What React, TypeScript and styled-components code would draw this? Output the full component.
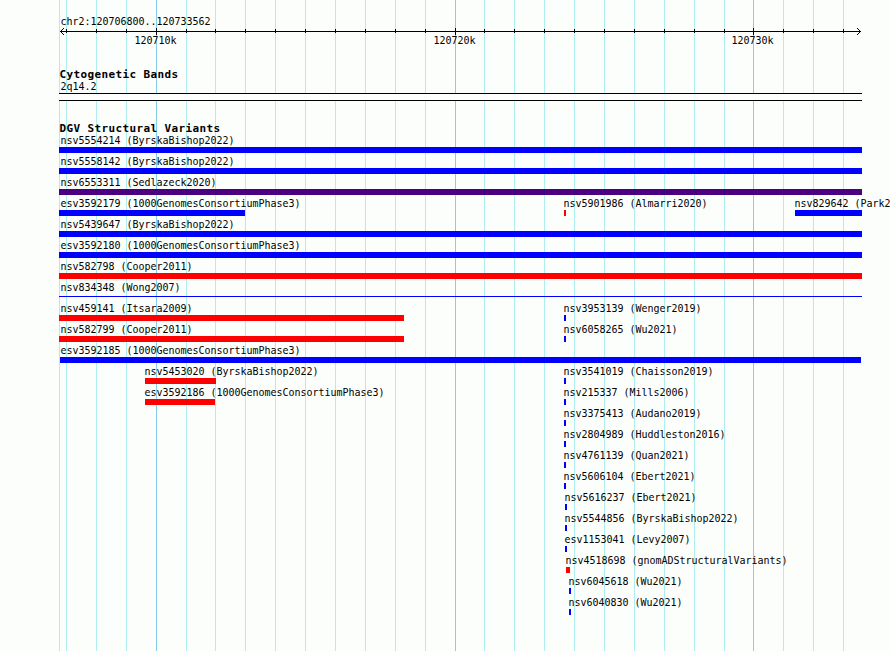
import styled, { createGlobalStyle } from 'styled-components';

type Feature = {
	name: string;
	labelX: number;
	start: number;
	end: number;
	color?: string;
	thin?: boolean;
};

const palette = {
	background: '#fcfefc',
	minor: '#afeeee',
	major: '#87ceeb',
	gain: '#0000ff',
	loss: '#ff0000',
	complex: '#4b0082',
};

const plot = { left: 59, right: 862 };

const minorLines = [
	59, 66, 96, 126, 186, 215, 245, 275, 305, 335, 365, 395, 425, 484, 514, 544,
	574, 604, 634, 664, 694, 724, 783, 813, 843,
];

const majorLines = [
	{ x: 156, label: '120710k' },
	{ x: 455, label: '120720k' },
	{ x: 753, label: '120730k' },
];

const full = (name: string, color = palette.gain): Feature => ({
	name,
	labelX: 60,
	start: plot.left,
	end: plot.right,
	color,
});

const small = (
	name: string,
	start = 564,
	width = 2,
	color = palette.gain
): Feature => ({
	name,
	labelX: start - 1,
	start,
	end: start + width,
	color,
});

const rows: Feature[][] = [
	[full('nsv5554214 (ByrskaBishop2022)')],
	[full('nsv5558142 (ByrskaBishop2022)')],
	[full('nsv6553311 (Sedlazeck2020)', palette.complex)],
	[
		{ ...full('esv3592179 (1000GenomesConsortiumPhase3)'), end: 245 },
		small('nsv5901986 (Almarri2020)', 564, 2, palette.loss),
		small('nsv829642 (Park2010)', 795, 67),
	],
	[full('nsv5439647 (ByrskaBishop2022)')],
	[full('esv3592180 (1000GenomesConsortiumPhase3)')],
	[full('nsv582798 (Cooper2011)', palette.loss)],
	[{ ...full('nsv834348 (Wong2007)'), thin: true }],
	[
		{ ...full('nsv459141 (Itsara2009)', palette.loss), end: 404 },
		small('nsv3953139 (Wenger2019)'),
	],
	[
		{ ...full('nsv582799 (Cooper2011)', palette.loss), end: 404 },
		small('nsv6058265 (Wu2021)'),
	],
	[
		{
			...full('esv3592185 (1000GenomesConsortiumPhase3)'),
			start: 60,
			end: 861,
		},
	],
	[
		small('nsv5453020 (ByrskaBishop2022)', 145, 71, palette.loss),
		small('nsv3541019 (Chaisson2019)'),
	],
	[
		small('esv3592186 (1000GenomesConsortiumPhase3)', 145, 70, palette.loss),
		small('nsv215337 (Mills2006)'),
	],
	[small('nsv3375413 (Audano2019)')],
	[small('nsv2804989 (Huddleston2016)')],
	[small('nsv4761139 (Quan2021)')],
	[small('nsv5606104 (Ebert2021)')],
	[small('nsv5616237 (Ebert2021)', 565)],
	[small('nsv5544856 (ByrskaBishop2022)', 565)],
	[small('esv1153041 (Levy2007)', 565)],
	[small('nsv4518698 (gnomADStructuralVariants)', 566, 4, palette.loss)],
	[small('nsv6045618 (Wu2021)', 569)],
	[small('nsv6040830 (Wu2021)', 569)],
];

const GlobalStyle = createGlobalStyle`
	body {
		margin: 0;
		background-color: ${palette.background};
		overflow: hidden;
	}
`;

const StyledBrowser = styled.main`
	position: relative;
	box-sizing: border-box;
	width: 890px;
	height: 651px;
	padding-top: 15px;
	overflow: hidden;
	display: flex;
	flex-direction: column;
	gap: 21px;
	color: #000;
	background-color: ${palette.background};
	font-family: 'DejaVu Sans Mono', monospace;
`;

const StyledGridLines = styled.svg`
	position: absolute;
	inset: 0;
	shape-rendering: crispEdges;
`;

const StyledTrack = styled.section`
	position: relative;
	display: flex;
	flex-direction: column;
`;

const StyledTitle = styled.h2`
	margin: 0 0 0 ${plot.left}px;
	height: 12px;
	font-size: 11px;
	line-height: 14px;
	font-weight: bold;
	letter-spacing: 0.38px;
	text-indent: 0.4px;
	white-space: pre;
`;

const StyledLabel = styled.span<{ $x: number }>`
	display: block;
	height: 13px;
	margin-left: ${({ $x }) => $x}px;
	font-size: 10px;
	line-height: 13px;
	letter-spacing: -0.02px;
	text-indent: 0.5px;
	white-space: pre;
	/* stretched from the baseline to get tall, narrow glyphs */
	transform: scaleY(1.1);
	transform-origin: 0 10px;
`;

const StyledAxis = styled.svg`
	display: block;
	shape-rendering: crispEdges;
`;

const StyledLayers = styled.div`
	display: grid;
	grid-template-columns: 890px;

	& > * {
		grid-area: 1 / 1;
	}
`;

const StyledAxisLabels = styled(StyledLayers)`
	margin-top: -1px;
`;

const StyledBand = styled.div`
	box-sizing: border-box;
	width: ${plot.right - plot.left}px;
	height: 8px;
	margin-left: ${plot.left}px;
	border: solid #000;
	border-width: 1px 0;
	background-color: #fff;
`;

const StyledRow = styled(StyledLayers)`
	height: 21px;
`;

const StyledFeature = styled.div``;

const StyledBar = styled.div<{ $color?: string; $thin?: boolean }>`
	height: ${({ $thin }) => ($thin ? 1 : 6)}px;
	margin-top: ${({ $thin }) => ($thin ? 2 : 0)}px;
	background-color: ${({ $color }) => $color};
`;

const GridLines = () => (
	<StyledGridLines width={890} height={651}>
		{minorLines.map((x) => (
			<rect key={x} x={x} width={1} height={651} fill={palette.minor} />
		))}
		{majorLines.map(({ x }) => (
			<rect key={x} x={x} width={1} height={651} fill={palette.major} />
		))}
	</StyledGridLines>
);

const Axis = () => (
	<StyledAxis width={890} height={7}>
		<rect x={60} y={3} width={801} height={1} />
		{minorLines.slice(1).map((x) => (
			<rect key={x} x={x} y={1} width={1} height={4} />
		))}
		{majorLines.map(({ x }) => (
			<rect key={x} x={x} width={1} height={7} />
		))}
		{[0, 1, 2, 3].map((step) => (
			<g key={step}>
				<rect x={60 + step} y={3 - step} width={1} height={1} />
				<rect x={60 + step} y={3 + step} width={1} height={1} />
				<rect x={860 - step} y={3 - step} width={1} height={1} />
				<rect x={860 - step} y={3 + step} width={1} height={1} />
			</g>
		))}
	</StyledAxis>
);

const App = () => {
	return (
		<StyledBrowser>
			<GlobalStyle />
			<GridLines />
			<StyledTrack>
				<StyledLabel $x={60}>chr2:120706800..120733562</StyledLabel>
				<Axis />
				<StyledAxisLabels>
					{majorLines.map(({ x, label }) => (
						<StyledLabel key={label} $x={x - 22}>
							{label}
						</StyledLabel>
					))}
				</StyledAxisLabels>
			</StyledTrack>
			<StyledTrack>
				<StyledTitle>Cytogenetic Bands</StyledTitle>
				<StyledLabel $x={60}>2q14.2</StyledLabel>
				<StyledBand />
			</StyledTrack>
			<StyledTrack>
				<StyledTitle>DGV Structural Variants</StyledTitle>
				{rows.map((features) => (
					<StyledRow key={features[0].name}>
						{features.map(({ name, labelX, start, end, color, thin }) => (
							<StyledFeature key={name}>
								<StyledLabel $x={labelX}>{name}</StyledLabel>
								<StyledBar
									$color={color}
									$thin={thin}
									style={{ marginLeft: start, width: end - start }}
								/>
							</StyledFeature>
						))}
					</StyledRow>
				))}
			</StyledTrack>
		</StyledBrowser>
	);
};

export default App;
